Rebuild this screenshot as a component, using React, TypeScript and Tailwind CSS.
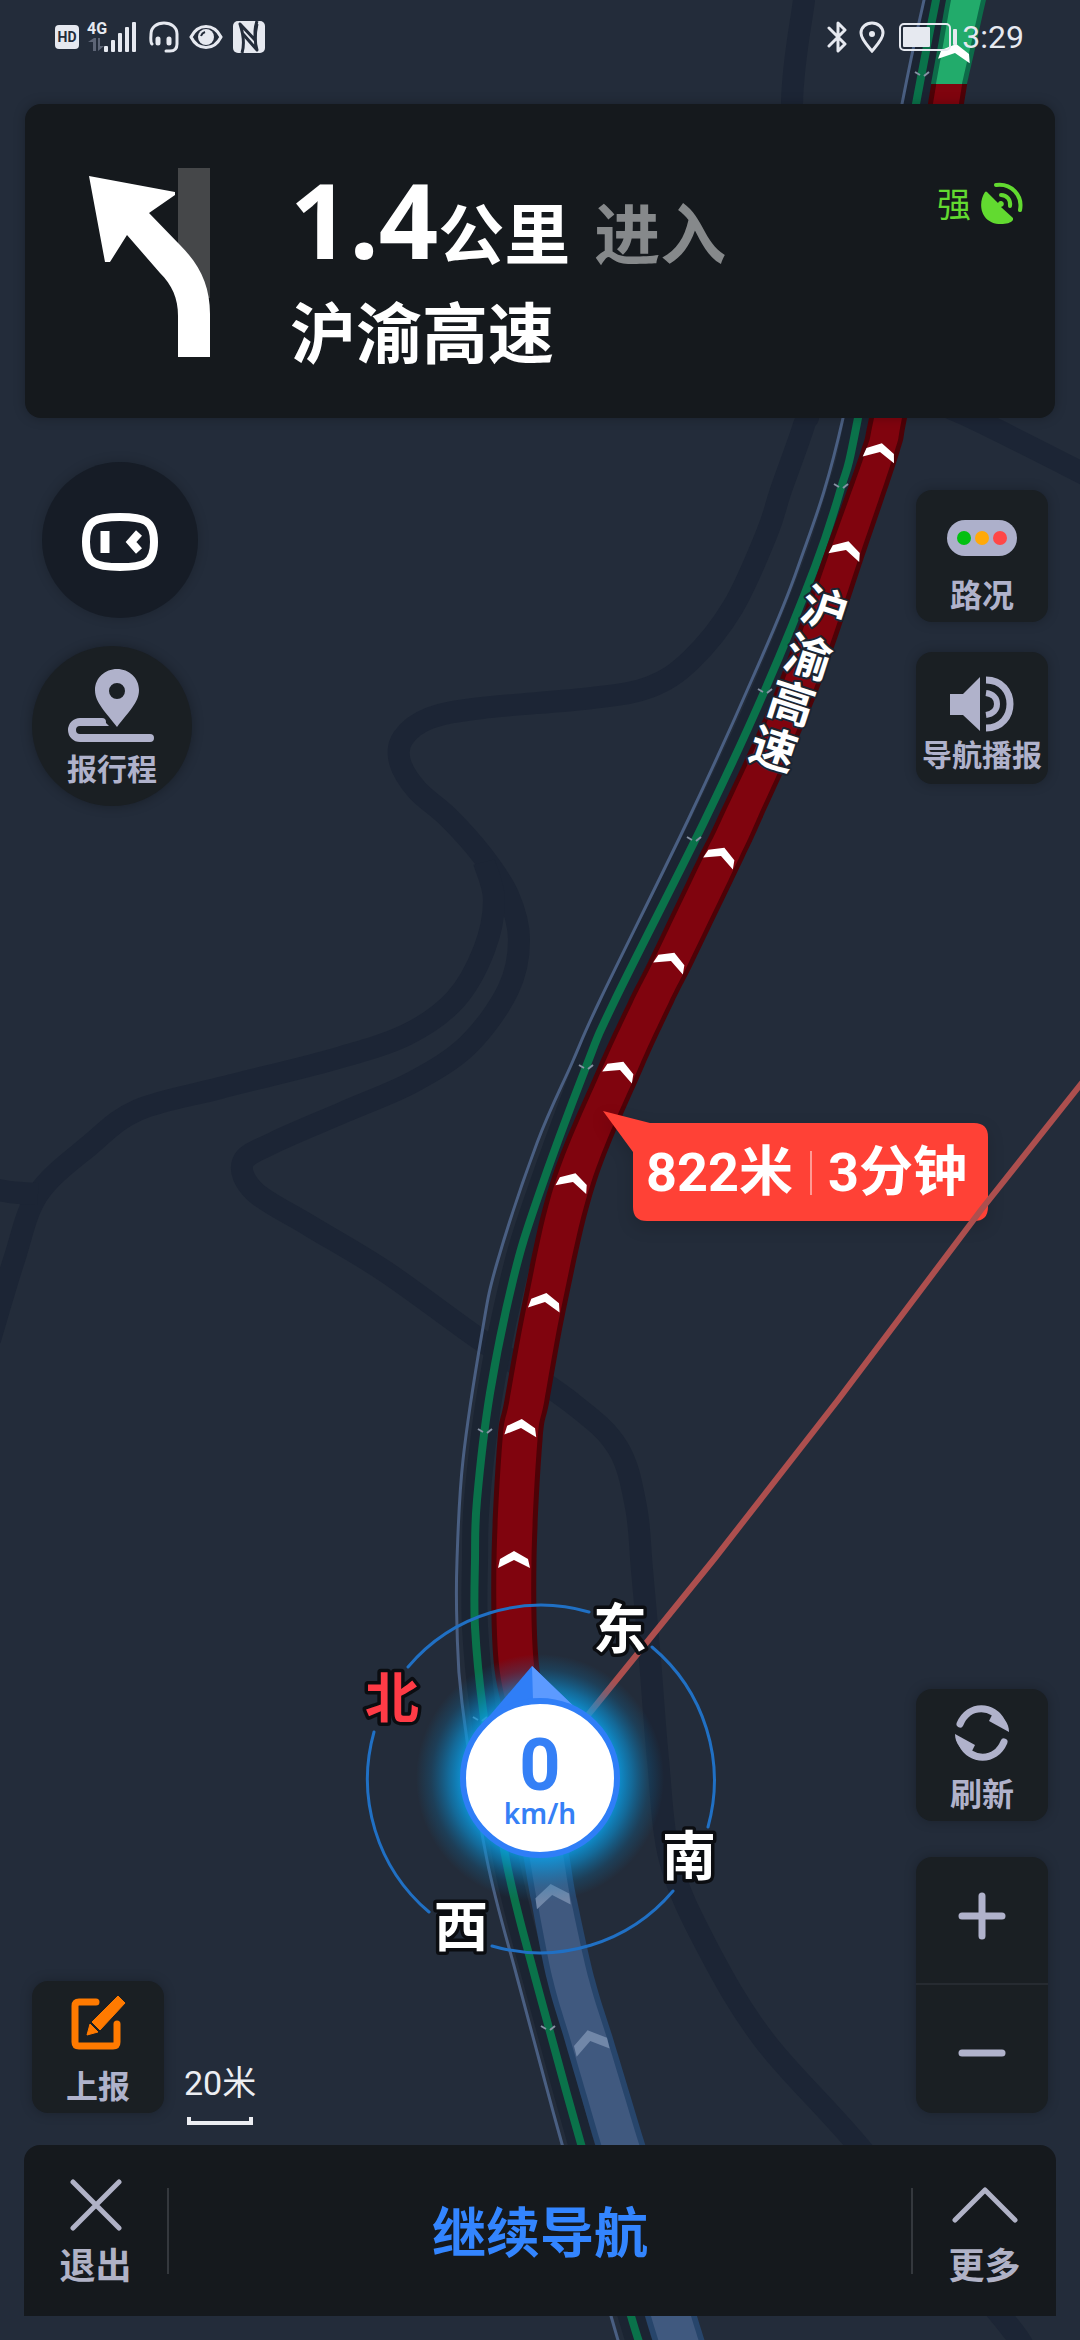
import type { ReactNode } from "react";

type Node = [x: number, y: number, width: number];
type Point = [x: number, y: number];

/** Smooth path through a list of points (Catmull-Rom turned into cubic Béziers). */
function smooth(points: Point[], lead = "M"): string {
  let d = `${lead}${points[0][0]} ${points[0][1]}`;
  for (let i = 0; i < points.length - 1; i++) {
    const p0 = points[Math.max(i - 1, 0)];
    const p1 = points[i];
    const p2 = points[i + 1];
    const p3 = points[Math.min(i + 2, points.length - 1)];
    const ax = p1[0] + (p2[0] - p0[0]) / 6;
    const ay = p1[1] + (p2[1] - p0[1]) / 6;
    const bx = p2[0] - (p3[0] - p1[0]) / 6;
    const by = p2[1] - (p3[1] - p1[1]) / 6;
    d += `C${ax} ${ay} ${bx} ${by} ${p2[0]} ${p2[1]}`;
  }
  return d;
}

/** Closed band around a centre line whose width changes with perspective. */
function ribbon(nodes: Node[], inset = 0): string {
  const left = nodes.map(([x, y, w]): Point => [x - w / 2 + inset, y]);
  const right = nodes.map(([x, y, w]): Point => [x + w / 2 - inset, y]).reverse();
  return `${smooth(left)}${smooth(right, "L")}Z`;
}

const CLEAR: Node[] = [[971, -20, 40], [966, 0, 40], [958, 40, 38], [949, 84, 36]];
const JAM: Node[] = [
  [949, 84, 36], [946, 104, 36], [918, 270, 37], [888, 418, 38], [880, 452, 39], [846, 550, 41], [797, 690, 43],
  [739, 820, 45], [721, 858, 46], [672, 960, 46], [651, 1002, 46], [620, 1069, 46], [573, 1183, 46], [545, 1302, 45],
  [527, 1400, 45], [520, 1440, 45], [514, 1559, 45], [516, 1660, 45], [527, 1720, 45], [531, 1760, 45],
];
const PASSED: Node[] = [
  [531, 1760, 46], [540, 1820, 46], [547, 1860, 46], [554, 1900, 46], [571, 1980, 48], [589, 2040, 49], [620, 2144, 50], [671, 2316, 52],
  [682, 2350, 52],
];
const OPPOSITE: Point[] = [
  [940, -20], [936, 0], [916, 104], [858, 418], [841, 488], [815, 567], [765, 690], [705, 820], [615, 1000], [586, 1067],
  [537, 1200], [513, 1280], [490, 1393], [477, 1500], [475, 1560], [475, 1627], [483, 1710], [506, 1860], [535, 1977],
  [581, 2144], [631, 2316], [642, 2350],
];
const SIDE: Point[] = [
  [928, -20], [924, 0], [902, 104], [843, 418], [798, 567], [753, 677], [688, 820], [600, 1000], [572, 1063], [537, 1143],
  [497, 1263], [482, 1333], [463, 1460], [457, 1560], [457, 1627], [462, 1703], [487, 1860], [517, 1977], [540, 2063],
  [562, 2144], [611, 2316], [621, 2350],
];
const MINOR_ROADS: Point[][] = [
  [
    [806, -20], [804, 0], [792, 104], [800, 250], [808, 400], [804, 425], [781, 490], [767, 533], [733, 607], [691, 660], [650, 687],
    [592, 698], [482, 708], [430, 718], [403, 738], [400, 762], [417, 790], [448, 817], [482, 855], [508, 895], [519, 940],
    [508, 990], [468, 1045], [413, 1082], [344, 1112], [275, 1142], [243, 1162], [255, 1192], [310, 1226], [386, 1272],
    [475, 1336], [572, 1403], [618, 1448], [636, 1507], [642, 1570], [650, 1660], [658, 1760], [670, 1860], [706, 1945],
    [764, 2040], [857, 2144], [1001, 2316], [1025, 2350],
  ],
  [
    [484, 862], [494, 900], [484, 950], [455, 1000], [406, 1035], [331, 1060], [220, 1088], [138, 1110], [90, 1145],
    [38, 1194], [14, 1260], [-10, 1340],
  ],
  [[-20, 1186], [10, 1192], [38, 1194]],
  [[940, 404], [985, 424], [1100, 482]],
];
/** x, y, heading in degrees */
const CHEVRONS: Node[] = [
  [955, 53, 8], [880, 452, 12], [846, 550, 16], [721, 856, 22], [671, 961, 22], [620, 1070, 22], [573, 1182, 16],
  [545, 1302, 9], [521, 1428, 5], [514, 1560, 0],
];
const PASSED_CHEVRONS: Node[] = [[552, 1894, -8], [590, 2040, -14]];
const TICKS: Point[] = [[922, 75], [841, 487], [765, 692], [694, 840], [586, 1068], [485, 1432], [480, 1720], [548, 2029]];
const ROAD_NAME: [string, number, number][] = [["沪", 825, 608], ["渝", 809, 656], ["高", 792, 702], ["速", 774, 748]];
const COMPASS: [string, number, number, string][] = [
  ["东", 620, 1628, "#ffffff"],
  ["北", 392, 1697, "#ff3b46"],
  ["南", 689, 1855, "#ffffff"],
  ["西", 461, 1926, "#ffffff"],
];

function MapCanvas() {
  return (
    <svg
      className="absolute inset-0 h-full w-full font-['Noto_Sans','Noto_Sans_CJK_SC',sans-serif]"
      viewBox="0 0 1080 2340"
      preserveAspectRatio="xMidYMid slice"
      role="img"
      aria-label="导航地图"
    >
      <defs>
        <radialGradient id="glow" cx="540" cy="1778" r="124" gradientUnits="userSpaceOnUse">
          <stop offset="0.6" stopColor="#0aa6f0" stopOpacity="0.9" />
          <stop offset="0.74" stopColor="#0a93d8" stopOpacity="0.6" />
          <stop offset="0.88" stopColor="#0a80c0" stopOpacity="0.22" />
          <stop offset="1" stopColor="#0a80c0" stopOpacity="0" />
        </radialGradient>
      </defs>

      <g fill="none" stroke="#1c2535" strokeWidth="22" strokeLinejoin="round">
        {MINOR_ROADS.map((road, i) => (
          <path key={i} d={smooth(road)} />
        ))}
      </g>

      <path d={smooth(OPPOSITE)} fill="none" stroke="#1b2432" strokeWidth="26" />
      <path d={smooth(SIDE)} fill="none" stroke="#4a5f82" strokeWidth="3" />
      <path d={smooth(OPPOSITE)} fill="none" stroke="#0a724a" strokeWidth="8" />
      <g fill="none" stroke="#8793a5" strokeWidth="2">
        {TICKS.map(([x, y]) => (
          <path key={y} d={`M${x - 7} ${y - 3}l5 3M${x + 7} ${y - 3}l-5 4`} />
        ))}
      </g>

      <path d={ribbon(PASSED)} fill="#27456b" />
      <path d={ribbon(PASSED, 6)} fill="#40597f" />
      <path d={ribbon(JAM)} fill="#4d0207" />
      <path d={ribbon(JAM, 5)} fill="#80040e" />
      <path d={ribbon(CLEAR)} fill="#0d6b49" />
      <path d={ribbon(CLEAR, 5)} fill="#22ab6b" />
      {CHEVRONS.map(([x, y, a]) => (
        <path key={y} d="M-16 8L-14 -1L0 -9L14 -1L16 8L0 0Z" fill="#ffffff" transform={`translate(${x} ${y}) rotate(${a})`} />
      ))}
      {PASSED_CHEVRONS.map(([x, y, a]) => (
        <path key={y} d="M-17 13L-17 2L0 -10L17 2L17 13L0 1Z" fill="#7187a8" transform={`translate(${x} ${y}) rotate(${a})`} />
      ))}

      <g fontSize="46" fontWeight="700" fill="#ffffff" stroke="#1b2432" strokeWidth="4" strokeLinejoin="round" paintOrder="stroke" textAnchor="middle">
        {ROAD_NAME.map(([ch, x, y]) => (
          <text key={ch} y="18" transform={`translate(${x} ${y}) rotate(18)`}>
            {ch}
          </text>
        ))}
      </g>

      <path
        d="M603 1111L650 1123H974Q988 1123 988 1137V1207Q988 1221 974 1221H647Q633 1221 633 1207V1152Z"
        fill="#ff4136"
        className="drop-shadow-[0_6px_8px_rgba(0,0,0,0.15)]"
      />
      <g className="font-['Roboto','Noto_Sans_CJK_SC',sans-serif]" fontSize="54" fontWeight="700" fill="#ffffff">
        <text x="646" y="1191">822米</text>
        <text x="828" y="1191">3分钟</text>
      </g>
      <path d="M811 1151V1195" stroke="#ff9a94" strokeWidth="2" />

      <path d="M588 1715L715 1558L838 1400L981 1210L1100 1060" fill="none" stroke="#ad4f4e" strokeWidth="6" />

      <g fill="none" stroke="#2070c4" strokeWidth="3" strokeLinecap="round">
        <path d="M589 1612A174 174 0 0 0 408 1667" />
        <path d="M374 1732A174 174 0 0 0 429 1912" />
        <path d="M492 1946A174 174 0 0 0 673 1891" />
        <path d="M708 1827A174 174 0 0 0 652 1647" />
      </g>
      <g fontSize="54" fontWeight="700" stroke="#0b0d11" strokeWidth="7" strokeLinejoin="round" paintOrder="stroke" textAnchor="middle">
        {COMPASS.map(([ch, x, y, color]) => (
          <text key={ch} x={x} y={y + 21} fill={color}>
            {ch}
          </text>
        ))}
      </g>

      <circle cx="540" cy="1778" r="124" fill="url(#glow)" />
      <path d="M532 1666L480 1727L540 1750L592 1724Z" fill="#2f7ef7" />
      <path d="M532 1666L585 1717Q560 1700 533 1700Z" fill="#5c9aff" />
      <circle cx="540" cy="1778" r="77" fill="#ffffff" stroke="#2f7ef7" strokeWidth="6" />
      <text fill="#3580f6" textAnchor="middle" className="font-['Roboto',sans-serif]">
        <tspan x="540" y="1790" fontSize="72" fontWeight="700">0</tspan>
        <tspan x="540" y="1824" fontSize="28" fontWeight="600" className="font-['Noto_Sans',sans-serif]">km/h</tspan>
      </text>
    </svg>
  );
}

function StatusBar() {
  return (
    <div className="flex h-[74px] items-center justify-between pr-14 pl-[55px] text-[#e6e9f0]">
      <div className="flex items-center">
        <span className="flex h-6 w-6 items-center justify-center rounded bg-[#e6e9f0] text-sm font-bold text-[#232c3a]">HD</span>
        <span className="ml-2 flex h-8 flex-col text-base leading-4 font-bold">
          4G
          <svg className="ml-px" width="16" height="14" viewBox="0 0 16 14" fill="#5d6576">
            <path d="M5 14V5H0L6 1H8V14ZM10 1V14L16 9H12V1Z" />
          </svg>
        </span>
        <svg className="-ml-1" width="34" height="32" viewBox="0 0 34 32" fill="currentColor">
          <rect x="1" y="25" width="4" height="6" rx="1" />
          <rect x="8" y="19" width="4" height="12" rx="1" />
          <rect x="15" y="12" width="4" height="19" rx="1" />
          <rect x="22" y="6" width="4" height="25" rx="1" />
          <rect x="29" y="1" width="4" height="30" rx="1" />
        </svg>
        <svg className="ml-3" width="30" height="32" viewBox="0 0 30 32" fill="none" stroke="currentColor" strokeWidth="3" strokeLinecap="round">
          <path d="M3 23C1 21 2 16 2 13C2 6 8 2 15 2C22 2 28 6 28 13V23C28 28 25 30 21 30H17" />
          <path d="M9 18V22M20 18V22" strokeWidth="5" />
        </svg>
        <svg className="ml-2.5" width="34" height="26" viewBox="0 0 34 26">
          <path d="M2 13C9 -1 25 -1 32 13C25 27 9 27 2 13Z" fill="none" stroke="currentColor" strokeWidth="3" />
          <circle cx="17" cy="13" r="8" fill="currentColor" />
          <path d="M12 12Q13 9 16 8" stroke="#232c3a" strokeWidth="2" fill="none" />
        </svg>
        <svg className="ml-2.5" width="32" height="32" viewBox="0 0 32 32">
          <rect width="32" height="32" rx="5" fill="currentColor" />
          <g fill="none" stroke="#232c3a" strokeWidth="3" strokeLinejoin="round">
            <path d="M9 32C12 22 10 12 7 3L22 19V10C22 6 23 3 24 0" />
            <path d="M10 13L24 29C21 20 22 12 24 3" />
          </g>
        </svg>
      </div>
      <div className="flex items-center">
        <svg width="20" height="32" viewBox="0 0 20 32" fill="none" stroke="currentColor" strokeWidth="3" strokeLinejoin="round" strokeLinecap="round">
          <path d="M2 7L18 23L11 30V2L18 9L2 25" />
        </svg>
        <svg className="ml-3" width="26" height="32" viewBox="0 0 26 32">
          <path d="M13 30C8 24 2 18 2 12A11 10 0 0 1 24 12C24 18 18 24 13 30Z" fill="none" stroke="currentColor" strokeWidth="3" />
          <circle cx="13" cy="13" r="3" fill="currentColor" />
        </svg>
        <svg className="ml-3.5" width="59" height="28" viewBox="0 0 59 28">
          <rect x="1" y="1" width="50" height="26" rx="4" fill="none" stroke="currentColor" strokeWidth="2" />
          <rect x="4" y="4" width="27" height="20" rx="1" fill="currentColor" />
          <rect x="54" y="6" width="4" height="16" rx="1" fill="currentColor" />
        </svg>
        <span className="ml-1 text-[32px] leading-8">3:29</span>
      </div>
    </div>
  );
}

function ManeuverCard() {
  return (
    <section className="mx-[25px] mt-[30px] flex h-[314px] items-start rounded-2xl bg-[#15191d] pr-8 pl-[63px] shadow-[0_0_12px_rgba(0,0,0,0.25)]">
      <svg className="mt-16 shrink-0" width="122" height="190" viewBox="0 0 122 190" role="img" aria-label="左前方转弯">
        <rect x="90" y="0" width="32" height="130" fill="#454749" />
        <path
          d="M1 8L87 24V27L61 45L92 77C112 97 122 118 122 146V189H90V148C90 130 84 117 72 105L39 67L22 94H17Z"
          fill="#ffffff"
        />
      </svg>
      <div className="ml-20 min-w-0 flex-1 pt-[60px] font-bold text-white">
        <p className="flex items-baseline text-[66px] leading-[110px]">
          <span className="font-['Noto_Sans',sans-serif] text-[104px]">1.4</span>
          <span>公里</span>
          <span className="ml-6 text-[#86898b]">进入</span>
        </p>
        <p className="mt-1 text-[66px] leading-[80px]">沪渝高速</p>
      </div>
      <div className="flex items-center gap-2.5 pt-[76px] text-[#62da30]">
        <span className="pt-1 text-[34px] leading-[42px]">强</span>
        <svg width="42" height="42" viewBox="0 0 42 42" role="img" aria-label="卫星信号">
          <path d="M4 10C-4 22 0 42 20 42C25 42 30 41 32 38V36L20 25A3 3 0 1 0 17 21L6 10Q5 9 4 10Z" fill="currentColor" />
          <g fill="none" stroke="currentColor" strokeWidth="4" strokeLinecap="round">
            <path d="M15 3C30 1 42 13 39 28" />
            <path d="M20 13C26 13 30 18 29 24" />
          </g>
        </svg>
      </div>
    </section>
  );
}

function Tile({ label, small, children }: { label: string; small?: boolean; children: ReactNode }) {
  return (
    <button
      type="button"
      className={`flex h-[132px] w-[132px] flex-col items-center justify-end rounded-2xl bg-[#1a1f23] font-bold text-[#b0b2cb] shadow-[0_0_12px_rgba(0,0,0,0.25)] ${small ? "pb-2.5 text-[30px] leading-9" : "pb-1.5 text-[32px] leading-10"}`}
    >
      {children}
      <span className="whitespace-nowrap">{label}</span>
    </button>
  );
}

export default function App() {
  return (
    <div className="relative flex min-h-screen flex-col overflow-hidden bg-[#232c3a] font-['Roboto','Noto_Sans_CJK_SC',sans-serif]">
      <MapCanvas />
      <header className="relative">
        <StatusBar />
        <ManeuverCard />
      </header>

      <main className="relative flex flex-1 justify-between px-8 pb-8">
        <div className="flex flex-col justify-between pt-11">
          <div className="flex flex-col gap-7">
            <button
              type="button"
              aria-label="语音助手"
              className="ml-[10px] flex h-[156px] w-[156px] items-center justify-center rounded-full bg-[#161c26] pt-1 shadow-[0_0_12px_rgba(0,0,0,0.2)]"
            >
              <svg width="76" height="58" viewBox="0 0 76 58" fill="none" stroke="#ffffff">
                <path d="M38 4C62 4 72 7 72 29C72 51 62 54 38 54C14 54 4 51 4 29C4 7 14 4 38 4Z" strokeWidth="8" />
                <path d="M23 18V40" strokeWidth="9" />
                <path d="M57 20L49 29L57 38" strokeWidth="8" />
              </svg>
            </button>
            <button
              type="button"
              className="flex h-40 w-40 flex-col items-center justify-end rounded-full bg-[#1a1f23] pb-[18px] text-[30px] leading-9 font-bold text-[#b0b2cb] shadow-[0_0_12px_rgba(0,0,0,0.3)]"
            >
              <svg className="mb-2.5" width="88" height="74" viewBox="0 0 88 74">
                <path
                  d="M49 1C37 1 27 10 27 22C27 35 38 44 49 59C60 44 71 35 71 22C71 10 61 1 49 1ZM49 15A8 8 0 1 1 49 31A8 8 0 1 1 49 15Z"
                  fill="currentColor"
                  fillRule="evenodd"
                />
                <path d="M34 54H12A8 8 0 0 0 12 70H82" fill="none" stroke="currentColor" strokeWidth="8" strokeLinecap="round" />
                <path d="M33 50L41 58H34L28 50Z" fill="currentColor" />
              </svg>
              报行程
            </button>
          </div>
          <div className="flex items-end gap-5">
            <Tile label="上报">
              <svg className="mb-4" width="56" height="56" viewBox="0 0 56 56" fill="none">
                <path d="M26 7H9Q5 7 5 11V47Q5 51 9 51H43Q47 51 47 47V29" stroke="#ff7a00" strokeWidth="7" strokeLinecap="round" />
                <path d="M48 1L55 8L30 35L22 27ZM20 29L28 37L17 40Z" fill="#ff7a00" stroke="#ff7a00" strokeLinejoin="round" />
              </svg>
            </Tile>
            <div className="-mb-3 flex flex-col items-center text-[34px] leading-10 text-[#eceef2]">
              <span>20米</span>
              <span className="mt-3.5 h-2 w-[66px] border-4 border-t-0 border-[#eceef2]" />
            </div>
          </div>
        </div>

        <div className="flex flex-col justify-between pt-[72px]">
          <div className="flex flex-col gap-[30px]">
            <Tile label="路况">
              <svg className="mb-5" width="70" height="36" viewBox="0 0 70 36">
                <rect width="70" height="36" rx="18" fill="#adb0cb" />
                <circle cx="17" cy="18" r="7" fill="#02c012" />
                <circle cx="35" cy="18" r="7" fill="#ffa90a" />
                <circle cx="53" cy="18" r="7" fill="#ff4747" />
              </svg>
            </Tile>
            <Tile label="导航播报" small>
              <svg className="mb-1.5" width="64" height="56" viewBox="0 0 64 56" fill="none">
                <path d="M0 18H13L30 1V55L13 39H0Z" fill="currentColor" />
                <path d="M36 4C52 4 60 16 60 28C60 40 52 52 36 52" stroke="currentColor" strokeWidth="7" />
                <path d="M36 17C43 18 47 22 47 28C47 34 43 38 36 39" stroke="currentColor" strokeWidth="6" />
              </svg>
            </Tile>
          </div>
          <div className="flex flex-col gap-9">
            <Tile label="刷新">
              <svg className="mb-3.5" width="56" height="56" viewBox="0 0 56 56" fill="none">
                <g id="arc">
                  <path d="M6 19C15 -2 40 0 48 17" stroke="currentColor" strokeWidth="7" strokeLinecap="round" />
                  <path d="M39 8C49 10 55 18 55 27L35 16Z" fill="currentColor" />
                </g>
                <use href="#arc" transform="rotate(180 28 28)" />
              </svg>
            </Tile>
            <div className="flex w-[132px] flex-col rounded-2xl bg-[#1a1f23] text-[#b0b2cb] shadow-[0_0_12px_rgba(0,0,0,0.25)]">
              <button type="button" aria-label="放大" className="flex h-32 items-center justify-center border-b-2 border-[#262b31] pb-2">
                <svg width="48" height="48" viewBox="0 0 48 48" stroke="currentColor" strokeWidth="7" strokeLinecap="round">
                  <path d="M4 24H44M24 4V44" />
                </svg>
              </button>
              <button type="button" aria-label="缩小" className="flex h-32 items-center justify-center pt-2">
                <svg width="48" height="48" viewBox="0 0 48 48" stroke="currentColor" strokeWidth="7" strokeLinecap="round">
                  <path d="M4 24H44" />
                </svg>
              </button>
            </div>
          </div>
        </div>
      </main>

      <footer className="relative mx-6 mb-6 flex h-[171px] items-center rounded-t-2xl bg-[#15191d] text-[#b0b2c6]">
        <button type="button" className="flex w-[143px] flex-col items-center pt-1 text-[36px] leading-10 font-bold">
          <svg className="mb-4" width="52" height="52" viewBox="0 0 52 52" stroke="currentColor" strokeWidth="5" strokeLinecap="round">
            <path d="M3 3L49 49M49 3L3 49" />
          </svg>
          退出
        </button>
        <span className="h-[86px] w-0.5 bg-[#34383d]" />
        <button type="button" className="flex-1 pt-2 text-[54px] leading-[60px] font-bold text-[#3385ff]">
          继续导航
        </button>
        <span className="h-[86px] w-0.5 bg-[#34383d]" />
        <button type="button" className="flex w-[143px] flex-col items-center pt-1 text-[36px] leading-10 font-bold">
          <svg className="mt-2 mb-6" width="66" height="36" viewBox="0 0 66 36" fill="none" stroke="currentColor" strokeWidth="5" strokeLinecap="round" strokeLinejoin="round">
            <path d="M3 33L33 3L63 33" />
          </svg>
          更多
        </button>
      </footer>
    </div>
  );
}
